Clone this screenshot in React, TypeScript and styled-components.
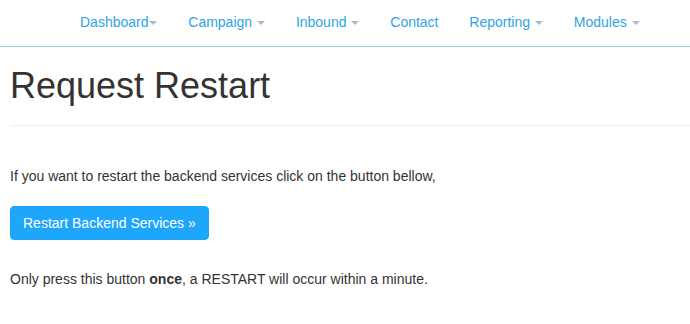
import React from "react";
import styled, { createGlobalStyle } from "styled-components";

const Global = createGlobalStyle`
  html, body { margin: 0; padding: 0; background: #fff; }
  body {
    font-family: "Liberation Sans", Arial, Helvetica, sans-serif;
    font-size: 14px;
    line-height: 20px;
    color: #333;
  }
`;

const NavBar = styled.nav`
  height: 46px;
  border-bottom: 1px solid #9ecbdd;
  display: flex;
  padding-left: 64.6px;
`;

const NavItem = styled.a`
  display: flex;
  align-items: center;
  height: 20px;
  padding: 12px 15.4px 14px;
  color: #2fa4e7;
  font-size: 14px;
  line-height: 20px;
  text-decoration: none;
  white-space: pre;
`;

const Caret = styled.span<{ $tight?: boolean }>`
  display: inline-block;
  width: 0;
  height: 0;
  margin-left: ${(p) => (p.$tight ? "1px" : "5px")};
  margin-top: 2px;
  border-top: 4px solid #a9bfcc;
  border-left: 4px solid transparent;
  border-right: 4px solid transparent;
`;

const Container = styled.main`
  padding: 0 0 0 10px;
`;

const PageHeader = styled.div`
  margin: 19px 0 20px;
  padding-bottom: 9px;
  border-bottom: 1px solid #eee;
`;

const Title = styled.h1`
  margin: 0 0 10px;
  font-size: 36px;
  line-height: 1.1;
  font-weight: 400;
  color: #333;
`;

const Para = styled.p<{ $mt: number }>`
  margin: ${(p) => p.$mt}px 0 0;
`;

const Button = styled.button`
  display: inline-block;
  margin-top: 20px;
  padding: 6px 12px;
  font-family: inherit;
  font-size: 14px;
  line-height: 20px;
  color: #fff;
  background: #1ea6fb;
  border: 1px solid #1ea6fb;
  border-radius: 4px;
  cursor: pointer;
`;

const navItems: { label: string; caret?: "tight" | "spaced" }[] = [
  { label: "Dashboard", caret: "tight" },
  { label: "Campaign", caret: "spaced" },
  { label: "Inbound", caret: "spaced" },
  { label: "Contact" },
  { label: "Reporting", caret: "spaced" },
  { label: "Modules", caret: "spaced" },
];

export default function App() {
  return (
    <>
      <Global />
      <NavBar>
        {navItems.map((n) => (
          <NavItem key={n.label} href="#">
            {n.label}
            {n.caret && <Caret $tight={n.caret === "tight"} />}
          </NavItem>
        ))}
      </NavBar>
      <Container>
        <PageHeader>
          <Title>Request Restart</Title>
        </PageHeader>
        <Para $mt={40}>If you want to restart the backend services click on the button bellow,</Para>
        <Button>Restart Backend Services »</Button>
        <Para $mt={29}>
          Only press this button <b>once</b>, a RESTART will occur within a minute.
        </Para>
      </Container>
    </>
  );
}
